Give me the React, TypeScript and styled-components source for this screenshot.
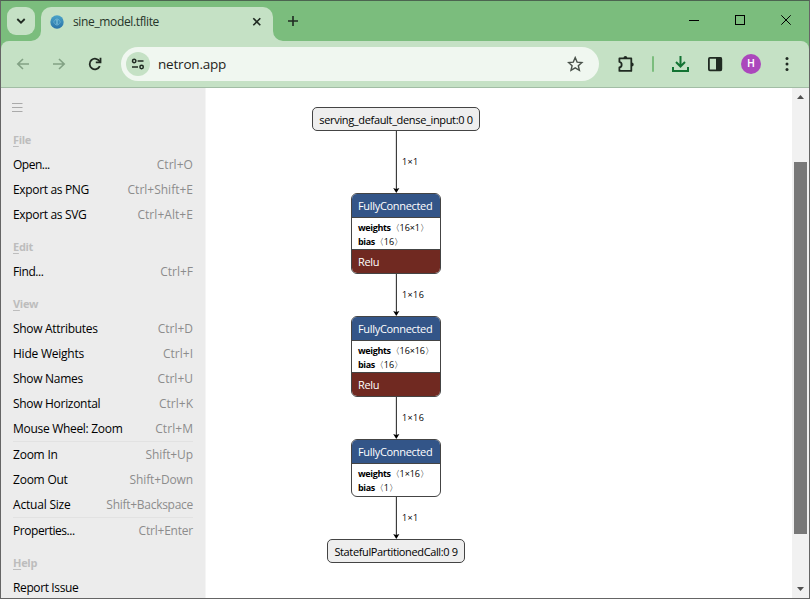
import React from "react";
import styled, { createGlobalStyle, css } from "styled-components";

const GlobalStyle = createGlobalStyle`
  * { box-sizing: border-box; }
  html, body { margin: 0; padding: 0; overflow: hidden; background: #fff; }
  body { font-family: "Open Sans", "Noto Sans", sans-serif; color: #000; }
`;

const Window = styled.div`
  width: 810px;
  height: 599px;
  display: flex;
  flex-direction: column;
  border: 1px solid #656565;
  border-top-color: #4c6450;
  overflow: hidden;
`;

const TitleBar = styled.div`
  height: 40px;
  flex: none;
  display: flex;
  background: #7bbd7d;
`;

const TabSearch = styled.div`
  width: 28px;
  height: 28px;
  margin: 6px 6px 0 6px;
  border-radius: 9px;
  background: #c5e1c5;
  display: flex;
  align-items: center;
  justify-content: center;
`;

const Tab = styled.div`
  position: relative;
  width: 232px;
  height: 34px;
  margin-top: 6px;
  padding: 0 11px 5px 9px;
  border-radius: 10px 10px 0 0;
  background: #c5e1c5;
  display: flex;
  align-items: center;
`;

const TabFlare = styled.svg<{ $side: "left" | "right" }>`
  position: absolute;
  bottom: 0;
  ${(p) => (p.$side === "left" ? css`left: -10px;` : css`right: -10px; transform: scaleX(-1);`)}
`;

const TabTitle = styled.span`
  flex: 1;
  margin-left: 9px;
  font-size: 12px;
  letter-spacing: -0.36px;
  line-height: 16px;
  color: #26352a;
`;

const NewTab = styled.div`
  width: 40px;
  height: 40px;
  display: flex;
  align-items: center;
  justify-content: center;
`;

const WindowControls = styled.div`
  margin-left: auto;
  display: flex;
`;

const ControlButton = styled.div`
  width: 46px;
  height: 38px;
  display: flex;
  align-items: center;
  justify-content: center;
`;

const ToolbarBack = styled.div`
  height: 47px;
  flex: none;
  background: #7bbd7d;
`;

const Toolbar = styled.div`
  height: 47px;
  background: #c5e1c5;
  border-radius: 8px 8px 0 0;
  border-bottom: 1px solid #a2bda5;
  display: flex;
  align-items: center;
  padding-left: 4px;
`;

const ToolButton = styled.div<{ $w: number }>`
  width: ${(p) => p.$w}px;
  height: 36px;
  flex: none;
  display: flex;
  align-items: center;
  justify-content: center;
`;

const AddressBar = styled.div`
  width: 478px;
  height: 34px;
  margin-left: 8px;
  padding: 0 15px 0 5px;
  border-radius: 17px;
  background: #f0f7f0;
  display: flex;
  align-items: center;
`;

const SiteInfo = styled.div`
  width: 24px;
  height: 24px;
  border-radius: 50%;
  background: #c5e1c5;
  display: flex;
  align-items: center;
  justify-content: center;
`;

const Url = styled.span`
  flex: 1;
  margin-left: 8px;
  font-size: 13.5px;
  line-height: 18px;
  letter-spacing: -0.2px;
  color: #1f2320;
`;

const Divider = styled.div`
  width: 2px;
  height: 16px;
  flex: none;
  border-radius: 1px;
  background: #7bbd7d;
`;

const Avatar = styled.div`
  width: 20px;
  height: 20px;
  border-radius: 50%;
  background: #ab47bc;
  color: #fff;
  font: 500 10.5px/20px Roboto, sans-serif;
  text-align: center;
`;

const Body = styled.div`
  flex: 1;
  min-height: 0;
  display: flex;
  background: #fff;
`;

const Sidebar = styled.aside`
  width: 205px;
  flex: none;
  padding: 14px 12px 0 12px;
  background: #ececec;
  border-right: 1px solid #f5f5f5;
  overflow: hidden;
`;

const MenuIcon = styled.svg`
  display: block;
  margin-left: -1px;
`;

const Groups = styled.div`
  margin-top: 13px;
`;

const Group = styled.section`
  margin-bottom: 7px;
`;

const GroupTitle = styled.div`
  height: 25px;
  font-size: 11px;
  font-weight: 700;
  line-height: 25px;
  letter-spacing: -0.3px;
  color: #bdbdbd;
`;

const Mnemonic = styled.span`
  text-decoration: underline;
  text-underline-offset: 2px;
`;

const MenuRow = styled.div<{ $separated?: boolean }>`
  display: flex;
  justify-content: space-between;
  font-size: 12px;
  line-height: 25px;
  white-space: nowrap;
  ${(p) => p.$separated && css`border-top: 1px solid #e2e2e2;`}
`;

const MenuLabel = styled.span<{ $track?: number }>`
  letter-spacing: ${(p) => p.$track ?? -0.3}px;
`;

const Shortcut = styled.span<{ $track?: number }>`
  letter-spacing: ${(p) => p.$track ?? 0}px;
  color: #8c8c8c;
`;

const Canvas = styled.main`
  flex: 1;
  display: flex;
  flex-direction: column;
  align-items: center;
  padding: 19px 206px 0 0;
`;

const Terminal = styled.div<{ $w: number; $track: number }>`
  width: ${(p) => p.$w}px;
  height: 24px;
  flex: none;
  border: 1px solid #444;
  border-radius: 5px;
  background: #eee;
  font-size: 11px;
  line-height: 23px;
  letter-spacing: ${(p) => p.$track}px;
  text-align: center;
  white-space: nowrap;
`;

const Layer = styled.div<{ $h: number }>`
  width: 90px;
  height: ${(p) => p.$h}px;
  flex: none;
  display: flex;
  flex-direction: column;
  border: 1px solid #444;
  border-radius: 6px;
  background: #fff;
  overflow: hidden;
`;

const LayerBand = styled.div<{ $kind: "title" | "activation" }>`
  height: 23px;
  flex: none;
  padding-left: 6px;
  font-size: 11px;
  line-height: 23px;
  letter-spacing: -0.32px;
  color: #fff;
  background: ${(p) => (p.$kind === "title" ? "#335588" : "#702921")};
`;

const LayerArgs = styled.div`
  flex: 1;
  padding: 3px 0 0 6px;
  border-top: 1px solid #444;
  font-size: 9px;
  line-height: 14px;
  letter-spacing: -0.1px;
  white-space: nowrap;
`;

const ArgsEnd = styled.div`
  height: 1px;
  flex: none;
  background: #444;
`;

const ArgName = styled.b`
  font-weight: 700;
  letter-spacing: -0.35px;
`;

const EdgeRow = styled.div<{ $h: number }>`
  position: relative;
  width: 10px;
  height: ${(p) => p.$h}px;
  flex: none;
`;

const EdgeLine = styled.svg`
  display: block;
`;

const EdgeLabel = styled.span`
  position: absolute;
  left: 11px;
  top: calc(50% - 7px);
  font-size: 9px;
  line-height: 14px;
  letter-spacing: 0.4px;
  white-space: nowrap;
`;

const ScrollTrack = styled.div`
  width: 17px;
  flex: none;
  display: flex;
  flex-direction: column;
  align-items: center;
  background: #f1f1f1;
`;

const ScrollArrow = styled.svg`
  margin: 7px 0 6px;
  flex: none;
`;

const ScrollThumb = styled.div`
  width: 13px;
  height: 372px;
  margin-top: 56px;
  margin-bottom: auto;
  background: #787878;
`;

type Item = { label: string; keys?: string; separated?: boolean; track?: number; keyTrack?: number };

const menu: { title: string; items: Item[] }[] = [
  {
    title: "File",
    items: [
      { label: "Open...", keys: "Ctrl+O", track: -0.5, keyTrack: 0.05 },
      { label: "Export as PNG", keys: "Ctrl+Shift+E", track: -0.34 },
      { label: "Export as SVG", keys: "Ctrl+Alt+E", track: -0.34, keyTrack: 0.05 },
    ],
  },
  { title: "Edit", items: [{ label: "Find...", keys: "Ctrl+F", track: -0.4 }] },
  {
    title: "View",
    items: [
      { label: "Show Attributes", keys: "Ctrl+D" },
      { label: "Hide Weights", keys: "Ctrl+I", track: -0.23 },
      { label: "Show Names", keys: "Ctrl+U" },
      { label: "Show Horizontal", keys: "Ctrl+K" },
      { label: "Mouse Wheel: Zoom", keys: "Ctrl+M", keyTrack: 0.05 },
      { label: "Zoom In", keys: "Shift+Up", separated: true, track: -0.23, keyTrack: -0.1 },
      { label: "Zoom Out", keys: "Shift+Down", track: -0.23, keyTrack: -0.13 },
      { label: "Actual Size", keys: "Shift+Backspace", track: -0.2, keyTrack: -0.28 },
      { label: "Properties...", keys: "Ctrl+Enter", separated: true, track: -0.45, keyTrack: -0.22 },
    ],
  },
  { title: "Help", items: [{ label: "Report Issue", track: -0.38 }] },
];

function Flare({ side }: { side: "left" | "right" }) {
  return (
    <TabFlare $side={side} width="10" height="10">
      <path d="M10 0 A10 10 0 0 1 0 10 H10 Z" fill="#c5e1c5" />
    </TabFlare>
  );
}

function Edge({ height, label }: { height: number; label: string }) {
  return (
    <EdgeRow $h={height}>
      <EdgeLine width="10" height={height}>
        <path d={`M5.4 0 V${height - 2}`} stroke="#333" strokeWidth="1.1" />
        <path d={`M2.2 ${height - 5} L5.3 ${height - 4} L8.4 ${height - 5} L5.3 ${height} Z`} fill="#000" />
      </EdgeLine>
      <EdgeLabel>{label}</EdgeLabel>
    </EdgeRow>
  );
}

function FullyConnected({ weights, bias, relu }: { weights: string; bias: string; relu?: boolean }) {
  return (
    <Layer $h={relu ? 81 : 58}>
      <LayerBand $kind="title">FullyConnected</LayerBand>
      <LayerArgs>
        <div><ArgName>weights</ArgName>{`〈${weights}〉`}</div>
        <div><ArgName>bias</ArgName>{`〈${bias}〉`}</div>
      </LayerArgs>
      {relu && <ArgsEnd />}
      {relu && <LayerBand $kind="activation">Relu</LayerBand>}
    </Layer>
  );
}

export default function App() {
  return (
    <Window>
      <GlobalStyle />
      <TitleBar>
        <TabSearch>
          <svg width="10" height="8" fill="none" stroke="#202a22" strokeWidth="1.8">
            <path d="M1.3 2 L5 5.7 L8.7 2" />
          </svg>
        </TabSearch>
        <Tab>
          <Flare side="left" />
          <Flare side="right" />
          <svg width="14" height="14">
            <defs>
              <linearGradient id="globe" x1="0" y1="0" x2="0" y2="1">
                <stop offset="0" stopColor="#4aa3c8" />
                <stop offset="1" stopColor="#2a72a8" />
              </linearGradient>
            </defs>
            <circle cx="7" cy="7" r="6.7" fill="url(#globe)" />
            <path d="M3.5 7 L6 4 L7 7 L6 10 Z M10.5 7 L8 4 L7 7 L8 10 Z M7 3 V11" fill="none" stroke="#79bcd8" strokeWidth=".6" />
          </svg>
          <TabTitle>sine_model.tflite</TabTitle>
          <svg width="10" height="10" stroke="#202a22" strokeWidth="1.6">
            <path d="M1.3 1.3 L8.3 8.3 M8.3 1.3 L1.3 8.3" />
          </svg>
        </Tab>
        <NewTab>
          <svg width="12" height="12" stroke="#202a22" strokeWidth="1.6">
            <path d="M6 1 V11 M1 6 H11" />
          </svg>
        </NewTab>
        <WindowControls>
          <ControlButton>
            <svg width="10" height="10"><path d="M0 5.5 H10" stroke="#000" /></svg>
          </ControlButton>
          <ControlButton>
            <svg width="10" height="10"><rect x=".5" y=".5" width="9" height="9" fill="none" stroke="#000" /></svg>
          </ControlButton>
          <ControlButton>
            <svg width="10" height="10"><path d="M.3 .3 L9.7 9.7 M9.7 .3 L.3 9.7" stroke="#000" /></svg>
          </ControlButton>
        </WindowControls>
      </TitleBar>
      <ToolbarBack>
        <Toolbar>
          <ToolButton $w={36}>
            <svg width="14" height="12" fill="none" stroke="#82a184" strokeWidth="1.6">
              <path d="M13 6 H1.8 M7 1 L1.8 6 L7 11" />
            </svg>
          </ToolButton>
          <ToolButton $w={36}>
            <svg width="14" height="12" fill="none" stroke="#82a184" strokeWidth="1.6">
              <path d="M1 6 H12.2 M7 1 L12.2 6 L7 11" />
            </svg>
          </ToolButton>
          <ToolButton $w={36}>
            <svg width="14" height="14" fill="none" stroke="#202a22" strokeWidth="1.8">
              <path d="M11.8 9.2 A5.3 5.3 0 1 1 11.6 4.4 L12.3 5.4" />
              <path d="M12.5 .7 V5.4 H7.8" />
            </svg>
          </ToolButton>
          <AddressBar>
            <SiteInfo>
              <svg width="14" height="12" fill="none" stroke="#202a22" strokeWidth="1.5">
                <circle cx="3.2" cy="3" r="1.7" />
                <path d="M6.6 3 H12.5 M1 9 H7" />
                <circle cx="10.6" cy="9" r="1.7" />
              </svg>
            </SiteInfo>
            <Url>netron.app</Url>
            <svg width="17" height="16" fill="none" stroke="#4a524b" strokeWidth="1.4">
              <path d="M8.2 1.6 L10.1 6.1 L14.9 6.5 L11.3 9.7 L12.4 14.4 L8.2 11.9 L4 14.4 L5.1 9.7 L1.5 6.5 L6.3 6.1 Z" />
            </svg>
          </AddressBar>
          <ToolButton $w={53}>
            <svg width="18" height="18" fill="none" stroke="#202a22" strokeWidth="1.8" strokeLinejoin="round">
              <path d="M2.4 3.4 H14.3 V15.9 H2.4 V12.5 C5.4 12 5.4 7.4 2.4 6.9 Z" />
              <path d="M6.5 3 A1.9 1.9 0 0 1 10.3 3 Z M14.7 7.6 A2 2 0 0 1 14.7 11.6 Z" fill="#202a22" stroke="none" />
            </svg>
          </ToolButton>
          <Divider />
          <ToolButton $w={51}>
            <svg width="18" height="18" fill="none" stroke="#137333" strokeWidth="2">
              <path d="M9.5 1 V11 M5 7 L9.5 11.5 L14 7 M2 12 V16 H17 V12" />
            </svg>
          </ToolButton>
          <ToolButton $w={20}>
            <svg width="16" height="16">
              <rect x="1.9" y="1.9" width="12.4" height="12.4" rx="1" fill="none" stroke="#202a22" strokeWidth="1.8" />
              <path d="M9 1.5 H14.5 V14.5 H9 Z" fill="#202a22" />
            </svg>
          </ToolButton>
          <ToolButton $w={52}>
            <Avatar>H</Avatar>
          </ToolButton>
          <ToolButton $w={20}>
            <svg width="4" height="16" fill="#202a22">
              <circle cx="2" cy="2.5" r="1.5" />
              <circle cx="2" cy="8" r="1.5" />
              <circle cx="2" cy="13.5" r="1.5" />
            </svg>
          </ToolButton>
        </Toolbar>
      </ToolbarBack>
      <Body>
        <Sidebar>
          <MenuIcon width="12" height="12" stroke="#aaa" strokeWidth="1">
            <path d="M0 1.5 H10.5 M0 5.5 H10.5 M0 9.5 H10.5" />
          </MenuIcon>
          <Groups>
            {menu.map((group) => (
              <Group key={group.title}>
                <GroupTitle>
                  <Mnemonic>{group.title[0]}</Mnemonic>
                  {group.title.slice(1)}
                </GroupTitle>
                {group.items.map((item) => (
                  <MenuRow key={item.label} $separated={item.separated}>
                    <MenuLabel $track={item.track}>{item.label}</MenuLabel>
                    {item.keys && <Shortcut $track={item.keyTrack}>{item.keys}</Shortcut>}
                  </MenuRow>
                ))}
              </Group>
            ))}
          </Groups>
        </Sidebar>
        <Canvas>
          <Terminal $w={168} $track={-0.34}>serving_default_dense_input:0 0</Terminal>
          <Edge height={62} label="1×1" />
          <FullyConnected weights="16×1" bias="16" relu />
          <Edge height={42} label="1×16" />
          <FullyConnected weights="16×16" bias="16" relu />
          <Edge height={42} label="1×16" />
          <FullyConnected weights="1×16" bias="1" />
          <Edge height={42} label="1×1" />
          <Terminal $w={138} $track={-0.37}>StatefulPartitionedCall:0 9</Terminal>
        </Canvas>
        <ScrollTrack>
          <ScrollArrow width="7" height="5" fill="#505050"><path d="M0 4 L3.5 0 L7 4 Z" /></ScrollArrow>
          <ScrollThumb />
          <ScrollArrow width="7" height="5" fill="#505050"><path d="M0 0 L3.5 4 L7 0 Z" /></ScrollArrow>
        </ScrollTrack>
      </Body>
    </Window>
  );
}
